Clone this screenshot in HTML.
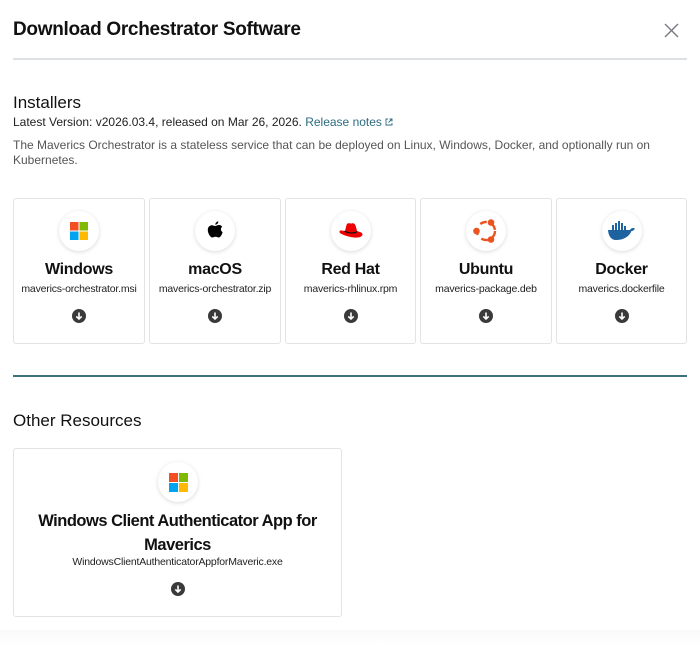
<!DOCTYPE html>
<html><head><meta charset="utf-8"><style>
*{box-sizing:border-box;margin:0;padding:0}
body{width:700px;height:646px;background:#fff;font-family:"Liberation Sans",sans-serif;color:#111;position:relative;overflow:hidden}
.a{position:absolute}
.card{position:absolute;border:1px solid #e3e3e3;border-radius:3px;background:#fff;text-align:center}
.circ{position:absolute;width:40px;height:40px;border-radius:50%;background:#fff;box-shadow:0 1px 4px rgba(0,0,0,.15);display:flex;align-items:center;justify-content:center}
.t{position:absolute;left:0;right:0;font-size:16px;font-weight:bold;color:#111;letter-spacing:-0.3px}
.f{position:absolute;left:0;right:0;font-size:10.5px;color:#222;letter-spacing:-0.2px}
.dl{position:absolute;width:14px;height:14px}
</style></head><body>
<div class="a" style="left:13px;top:19px;font-size:19px;font-weight:bold;letter-spacing:-0.3px">Download Orchestrator Software</div>
<svg class="a" style="left:664px;top:23px" width="15" height="15" viewBox="0 0 15 15"><path d="M1 1L14 14M14 1L1 14" stroke="#777a80" stroke-width="1.4"/></svg>
<div class="a" style="left:13px;top:58px;width:674px;height:2px;background:#dde1e4"></div>
<div class="a" style="left:13px;top:93px;font-size:17px">Installers</div>
<div class="a" style="left:13px;top:115px;font-size:12px;color:#222">Latest Version: v2026.03.4, released on Mar 26, 2026. <span style="color:#2c6c80">Release notes</span> <svg width="8" height="8" viewBox="0 0 8 8"><path d="M3 1H1V7H7V5M4.5 1H7V3.5M7 1L3.5 4.5" stroke="#2c6c80" fill="none" stroke-width=".9"/></svg></div>
<div class="a" style="left:13px;top:138px;width:670px;font-size:12px;line-height:15px;color:#555">The Maverics Orchestrator is a stateless service that can be deployed on Linux, Windows, Docker, and optionally run on Kubernetes.</div>

<div class="card" style="left:13px;top:198px;width:132px;height:146px">
<div class="circ" style="left:45px;top:12px"><svg width="18" height="18"><rect x="0" y="0" width="8.5" height="8.5" fill="#f25022"/><rect x="9.5" y="0" width="8.5" height="8.5" fill="#7fba00"/><rect x="0" y="9.5" width="8.5" height="8.5" fill="#00a4ef"/><rect x="9.5" y="9.5" width="8.5" height="8.5" fill="#ffb900"/></svg></div>
<div class="t" style="top:62px">Windows</div><div class="f" style="top:84px">maverics-orchestrator.msi</div>
<svg class="dl" style="left:58px;top:110px" viewBox="0 0 14 14"><circle cx="7" cy="7" r="7" fill="#3a3a3a"/><path d="M7 3.5V10M4.3 7.4L7 10L9.7 7.4" stroke="#fff" stroke-width="1.6" fill="none"/></svg></div>

<div class="card" style="left:149px;top:198px;width:132px;height:146px">
<div class="circ" style="left:45px;top:12px"><svg width="18" height="20" viewBox="0 0 18 20"><path d="M9 5C10 5 11.5 4 13 4C14.5 4 15.6 4.8 16.2 5.8C14.6 6.8 14.3 9.8 16.6 11.2C16 13.5 14.3 16.5 12.8 16.5C11.5 16.5 11.2 15.8 9.6 15.8C8 15.8 7.5 16.5 6.3 16.5C4.5 16.5 1.8 12.5 1.8 9C1.8 6 3.8 4.3 5.8 4.3C7.2 4.3 8 5 9 5Z M9.3 3.7C9.3 2 10.6 0.6 12.3 0.4C12.4 2.2 11 3.7 9.3 3.7Z" fill="#000"/></svg></div>
<div class="t" style="top:62px">macOS</div><div class="f" style="top:84px">maverics-orchestrator.zip</div>
<svg class="dl" style="left:58px;top:110px" viewBox="0 0 14 14"><circle cx="7" cy="7" r="7" fill="#3a3a3a"/><path d="M7 3.5V10M4.3 7.4L7 10L9.7 7.4" stroke="#fff" stroke-width="1.6" fill="none"/></svg></div>

<div class="card" style="left:285px;top:198px;width:131px;height:146px">
<div class="circ" style="left:45px;top:12px"><svg width="26" height="18" viewBox="0 0 26 18"><path d="M7 9L8.5 3C9 1.5 10 1 11.5 1.3C13 1.7 14 1.2 15 1.2C16.5 1.2 17.5 3 18 5L19 9C22 10 24.5 10.5 24.5 12.5C24.5 14.5 21 16 16 15.5C10 15 4 12.5 2 11C1 10 1.5 8 3.5 8.5Z" fill="#e00"/><path d="M6.5 9.2C10 11 16 12 19 9.5" stroke="#111" stroke-width="1.2" fill="none"/></svg></div>
<div class="t" style="top:62px">Red Hat</div><div class="f" style="top:84px">maverics-rhlinux.rpm</div>
<svg class="dl" style="left:58px;top:110px" viewBox="0 0 14 14"><circle cx="7" cy="7" r="7" fill="#3a3a3a"/><path d="M7 3.5V10M4.3 7.4L7 10L9.7 7.4" stroke="#fff" stroke-width="1.6" fill="none"/></svg></div>

<div class="card" style="left:420px;top:198px;width:132px;height:146px">
<div class="circ" style="left:45px;top:12px"><svg width="28" height="28" viewBox="0 0 28 28"><circle cx="14" cy="14" r="9" stroke="#e95420" stroke-width="2.4" fill="none" stroke-dasharray="7 5"/><circle cx="19" cy="5.5" r="3.3" fill="#e95420"/><circle cx="4.5" cy="14" r="3.3" fill="#e95420"/><circle cx="19" cy="22.5" r="3.3" fill="#e95420"/></svg></div>
<div class="t" style="top:62px">Ubuntu</div><div class="f" style="top:84px">maverics-package.deb</div>
<svg class="dl" style="left:58px;top:110px" viewBox="0 0 14 14"><circle cx="7" cy="7" r="7" fill="#3a3a3a"/><path d="M7 3.5V10M4.3 7.4L7 10L9.7 7.4" stroke="#fff" stroke-width="1.6" fill="none"/></svg></div>

<div class="card" style="left:556px;top:198px;width:131px;height:146px">
<div class="circ" style="left:45px;top:12px"><svg width="30" height="22" viewBox="0 0 30 22"><path d="M1 10H23C24 8 26 7.5 28 8.5C27 10 26 11 24.5 11C22 17 16 20 9 20C4 20 1.5 16 1 10Z" fill="#1d63a0"/><rect x="5" y="5" width="2" height="5" fill="#1d63a0"/><rect x="8" y="3" width="2" height="7" fill="#1d63a0"/><rect x="11" y="1" width="2" height="9" fill="#1d63a0"/><rect x="14" y="3" width="2" height="7" fill="#1d63a0"/><rect x="17" y="6" width="2" height="4" fill="#1d63a0"/></svg></div>
<div class="t" style="top:62px">Docker</div><div class="f" style="top:84px">maverics.dockerfile</div>
<svg class="dl" style="left:58px;top:110px" viewBox="0 0 14 14"><circle cx="7" cy="7" r="7" fill="#3a3a3a"/><path d="M7 3.5V10M4.3 7.4L7 10L9.7 7.4" stroke="#fff" stroke-width="1.6" fill="none"/></svg></div>

<div class="a" style="left:13px;top:375px;width:674px;height:2px;background:#3d7080"></div>
<div class="a" style="left:13px;top:411px;font-size:17px">Other Resources</div>

<div class="card" style="left:13px;top:448px;width:329px;height:169px">
<div class="circ" style="left:144px;top:13px"><svg width="19" height="19"><rect x="0" y="0" width="9" height="9" fill="#f25022"/><rect x="10" y="0" width="9" height="9" fill="#7fba00"/><rect x="0" y="10" width="9" height="9" fill="#00a4ef"/><rect x="10" y="10" width="9" height="9" fill="#ffb900"/></svg></div>
<div class="t" style="top:60px;font-size:16.5px;line-height:24px;padding:0 6px;letter-spacing:-0.5px">Windows Client Authenticator App for Maverics</div>
<div class="f" style="top:107px">WindowsClientAuthenticatorAppforMaveric.exe</div>
<svg class="dl" style="left:157px;top:133px" viewBox="0 0 14 14"><circle cx="7" cy="7" r="7" fill="#3a3a3a"/><path d="M7 3.5V10M4.3 7.4L7 10L9.7 7.4" stroke="#fff" stroke-width="1.6" fill="none"/></svg></div>

<div class="a" style="left:0;top:630px;width:700px;height:16px;background:linear-gradient(#fafafa,#fff)"></div>
</body></html>
